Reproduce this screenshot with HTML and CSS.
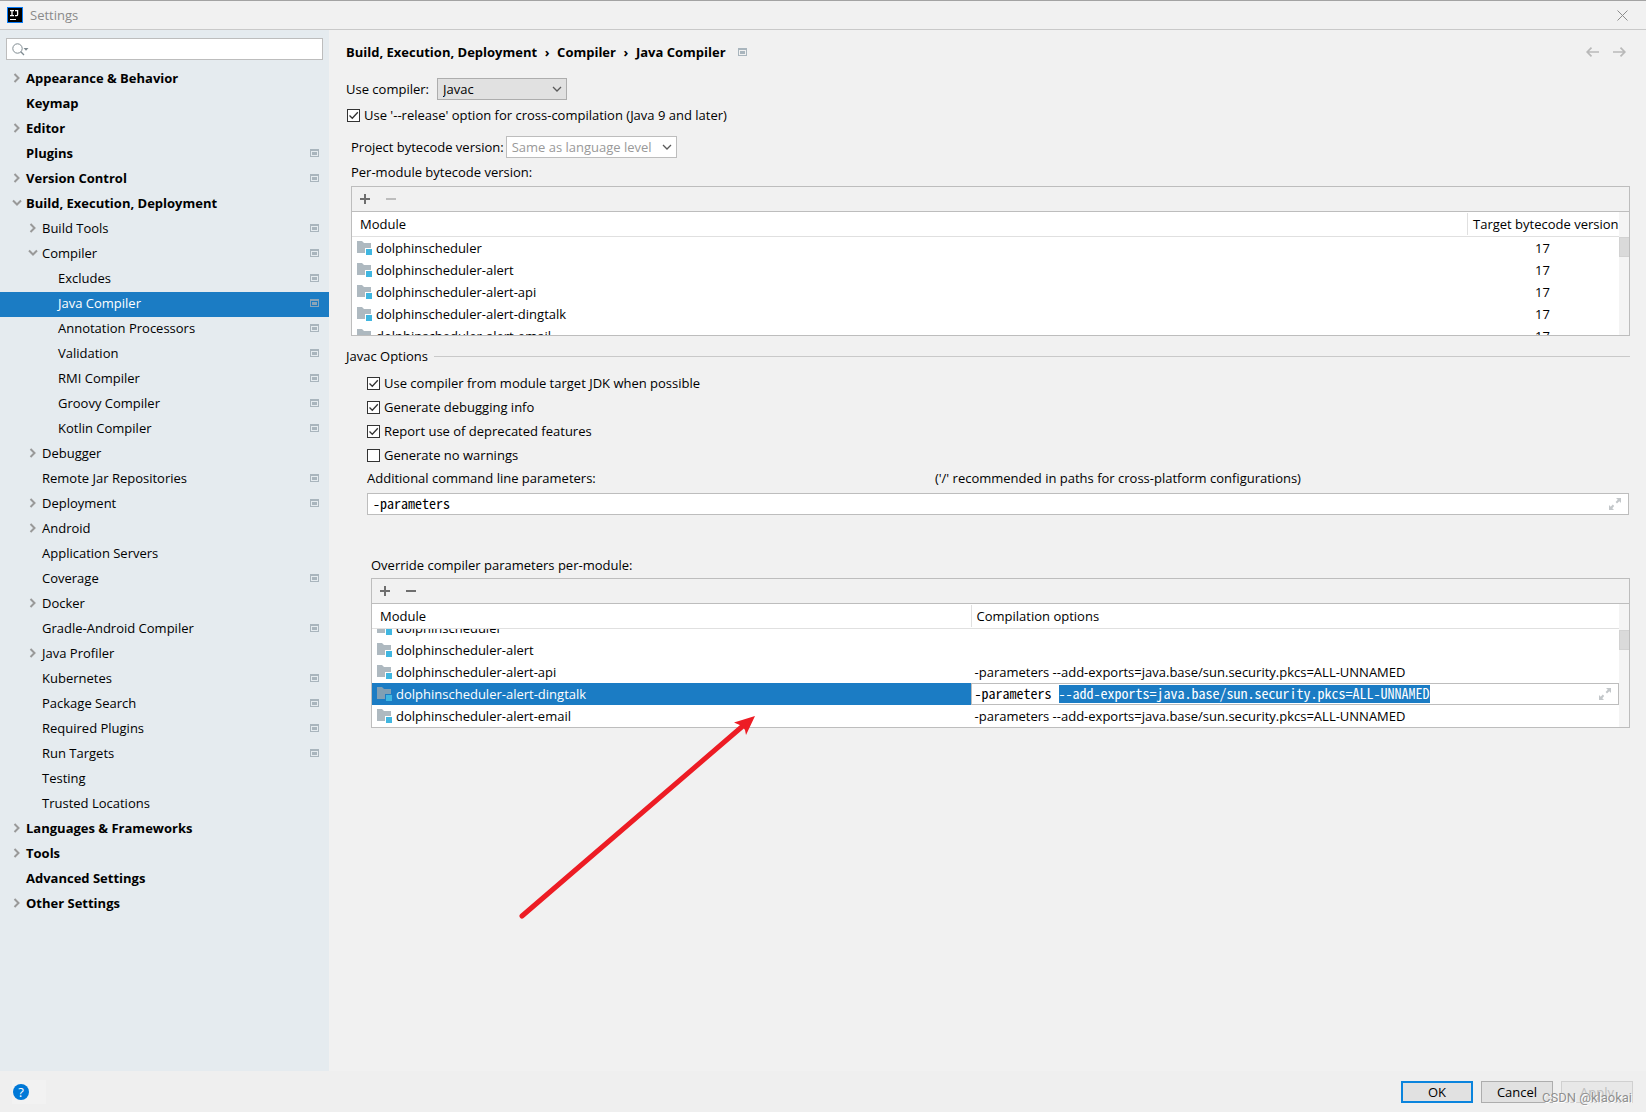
FILE: index.html
```html
<!DOCTYPE html>
<html lang="en">
<head>
<meta charset="utf-8">
<title>Settings</title>
<link rel="stylesheet" href="styles.css">
</head>
<body>
<svg class="sprite" aria-hidden="true">
  <symbol id="scope" viewBox="0 0 9 8"><path fill="currentColor" fill-rule="evenodd" d="M0 0h9v8H0zM1 2v5h7V2zM2 3h5v3H2z"/></symbol>
  <symbol id="closed" viewBox="0 0 8 10"><path d="M1.500 1 5.500 5 1.500 9" fill="none" stroke="currentColor" stroke-width="2"/></symbol>
  <symbol id="open" viewBox="0 0 10 8"><path d="M1 1.500 5 5.500 9 1.500" fill="none" stroke="currentColor" stroke-width="2"/></symbol>
  <symbol id="down" viewBox="0 0 10 6"><path d="M1 1 5 5 9 1" fill="none" stroke="currentColor" stroke-width="1.300"/></symbol>
  <symbol id="module" viewBox="0 0 16 14"><path fill="#9aa7b0" fill-opacity=".8" d="M0 0h5l2 2h7v5H8v5H0z"/><path fill="#40b6e0" d="M9 8h6v6H9z"/></symbol>
  <symbol id="plus" viewBox="0 0 10 10"><path fill="currentColor" d="M4 0h2v4h4v2H6v4H4V6H0V4h4z"/></symbol>
  <symbol id="minus" viewBox="0 0 10 10"><path fill="currentColor" d="M0 4h10v2H0z"/></symbol>
  <symbol id="expand" viewBox="0 0 12 12"><path fill="currentColor" d="M7 0h5v5L10.300 3.300 8 5.500 6.600 4.100 8.800 1.800zM0 7l1.700 1.700L3.800 6.600 5.200 8 3.300 10.300 5 12H0z"/></symbol>
</svg>

<header class="titlebar">
  <svg class="logo" viewBox="0 0 16 16" aria-hidden="true"><path fill="#087cfa" d="M0 0h16v16H0z"/><path fill="#000" d="M1 1h14v14H1z"/><path fill="none" stroke="#fff" stroke-width="1.300" d="M3 3.600h4M5 3.600v5M3 8.600h4M8 3.600h2.600v3.800q0 1.200-1.200 1.200H8"/><path fill="#fff" d="M3 12h6v1H3z"/></svg>
  <h1 class="window-title">Settings</h1>
  <button class="icon-button close" aria-label="Close"><svg width="11" height="11" viewBox="0 0 11 11"><path d="M.5.500l10 10M10.500.500l-10 10" stroke="#8c8c8c" fill="none"/></svg></button>
</header>

<div class="workspace">
  <aside class="sidebar">
    <div class="search">
      <svg width="17" height="13" viewBox="0 0 17 13" aria-hidden="true"><circle cx="5.500" cy="5.500" r="4.700" fill="none" stroke="#7f8b91"/><path d="M8.800 8.800 12 12" stroke="#7f8b91" stroke-width="1.300"/><path fill="#7f8b91" d="M11.500 5h5L14 7.800z"/></svg>
      <input type="text" aria-label="Search settings">
    </div>
    <nav aria-label="Settings categories">
      <ul class="tree">
        <li><a class="node top" href="#"><svg class="twisty"><use href="#closed"/></svg><span>Appearance &amp; Behavior</span></a></li>
        <li><a class="node top" href="#"><i class="twisty"></i><span>Keymap</span></a></li>
        <li><a class="node top" href="#"><svg class="twisty"><use href="#closed"/></svg><span>Editor</span></a></li>
        <li><a class="node top" href="#"><i class="twisty"></i><span>Plugins</span><svg class="scope"><use href="#scope"/></svg></a></li>
        <li><a class="node top" href="#"><svg class="twisty"><use href="#closed"/></svg><span>Version Control</span><svg class="scope"><use href="#scope"/></svg></a></li>
        <li><a class="node top" href="#"><svg class="twisty"><use href="#open"/></svg><span>Build, Execution, Deployment</span></a>
          <ul>
            <li><a class="node group" href="#"><svg class="twisty"><use href="#closed"/></svg><span>Build Tools</span><svg class="scope"><use href="#scope"/></svg></a></li>
            <li><a class="node group" href="#"><svg class="twisty"><use href="#open"/></svg><span>Compiler</span><svg class="scope"><use href="#scope"/></svg></a>
              <ul>
                <li><a class="node leaf" href="#"><i class="twisty"></i><span>Excludes</span><svg class="scope"><use href="#scope"/></svg></a></li>
                <li><a class="node leaf selected" href="#" aria-current="page"><i class="twisty"></i><span>Java Compiler</span><svg class="scope"><use href="#scope"/></svg></a></li>
                <li><a class="node leaf" href="#"><i class="twisty"></i><span>Annotation Processors</span><svg class="scope"><use href="#scope"/></svg></a></li>
                <li><a class="node leaf" href="#"><i class="twisty"></i><span>Validation</span><svg class="scope"><use href="#scope"/></svg></a></li>
                <li><a class="node leaf" href="#"><i class="twisty"></i><span>RMI Compiler</span><svg class="scope"><use href="#scope"/></svg></a></li>
                <li><a class="node leaf" href="#"><i class="twisty"></i><span>Groovy Compiler</span><svg class="scope"><use href="#scope"/></svg></a></li>
                <li><a class="node leaf" href="#"><i class="twisty"></i><span>Kotlin Compiler</span><svg class="scope"><use href="#scope"/></svg></a></li>
              </ul>
            </li>
            <li><a class="node group" href="#"><svg class="twisty"><use href="#closed"/></svg><span>Debugger</span></a></li>
            <li><a class="node group" href="#"><i class="twisty"></i><span>Remote Jar Repositories</span><svg class="scope"><use href="#scope"/></svg></a></li>
            <li><a class="node group" href="#"><svg class="twisty"><use href="#closed"/></svg><span>Deployment</span><svg class="scope"><use href="#scope"/></svg></a></li>
            <li><a class="node group" href="#"><svg class="twisty"><use href="#closed"/></svg><span>Android</span></a></li>
            <li><a class="node group" href="#"><i class="twisty"></i><span>Application Servers</span></a></li>
            <li><a class="node group" href="#"><i class="twisty"></i><span>Coverage</span><svg class="scope"><use href="#scope"/></svg></a></li>
            <li><a class="node group" href="#"><svg class="twisty"><use href="#closed"/></svg><span>Docker</span></a></li>
            <li><a class="node group" href="#"><i class="twisty"></i><span>Gradle-Android Compiler</span><svg class="scope"><use href="#scope"/></svg></a></li>
            <li><a class="node group" href="#"><svg class="twisty"><use href="#closed"/></svg><span>Java Profiler</span></a></li>
            <li><a class="node group" href="#"><i class="twisty"></i><span>Kubernetes</span><svg class="scope"><use href="#scope"/></svg></a></li>
            <li><a class="node group" href="#"><i class="twisty"></i><span>Package Search</span><svg class="scope"><use href="#scope"/></svg></a></li>
            <li><a class="node group" href="#"><i class="twisty"></i><span>Required Plugins</span><svg class="scope"><use href="#scope"/></svg></a></li>
            <li><a class="node group" href="#"><i class="twisty"></i><span>Run Targets</span><svg class="scope"><use href="#scope"/></svg></a></li>
            <li><a class="node group" href="#"><i class="twisty"></i><span>Testing</span></a></li>
            <li><a class="node group" href="#"><i class="twisty"></i><span>Trusted Locations</span></a></li>
          </ul>
        </li>
        <li><a class="node top" href="#"><svg class="twisty"><use href="#closed"/></svg><span>Languages &amp; Frameworks</span></a></li>
        <li><a class="node top" href="#"><svg class="twisty"><use href="#closed"/></svg><span>Tools</span></a></li>
        <li><a class="node top" href="#"><i class="twisty"></i><span>Advanced Settings</span></a></li>
        <li><a class="node top" href="#"><svg class="twisty"><use href="#closed"/></svg><span>Other Settings</span></a></li>
      </ul>
    </nav>
  </aside>

  <main class="content">
    <div class="crumbs">
      <a href="#">Build, Execution, Deployment</a><span class="sep">›</span><a href="#">Compiler</a><span class="sep">›</span><a href="#">Java Compiler</a>
      <svg class="scope"><use href="#scope"/></svg>
      <div class="history">
        <button class="icon-button" aria-label="Back"><svg width="13" height="10" viewBox="0 0 13 10"><path d="M1 5h12M5.500.700 1.200 5l4.300 4.300" fill="none" stroke="#b9b9b9" stroke-width="1.700"/></svg></button>
        <button class="icon-button" aria-label="Forward"><svg width="13" height="10" viewBox="0 0 13 10"><path d="M0 5h12M7.500.700 11.800 5 7.500 9.300" fill="none" stroke="#b9b9b9" stroke-width="1.700"/></svg></button>
      </div>
    </div>

    <div class="field compiler">
      <label for="compiler">Use compiler:</label>
      <div class="combo button-like"><select id="compiler"><option>Javac</option></select><svg><use href="#down"/></svg></div>
    </div>
    <label class="check release"><input type="checkbox" checked><span>Use '--release' option for cross-compilation (Java 9 and later)</span></label>

    <section class="bytecode">
      <div class="field">
        <label for="bytecode">Project bytecode version:</label>
        <div class="combo hint"><select id="bytecode"><option>Same as language level</option></select><svg><use href="#down"/></svg></div>
      </div>
      <h2 class="caption">Per-module bytecode version:</h2>
      <div class="panel">
        <div class="toolbar">
          <button class="icon-button" aria-label="Add"><svg><use href="#plus"/></svg></button>
          <button class="icon-button" aria-label="Remove" disabled><svg><use href="#minus"/></svg></button>
        </div>
        <div class="viewport">
          <div class="scroller">
            <table class="targets">
              <thead><tr><th>Module</th><th class="target">Target bytecode version</th></tr></thead>
              <tbody>
                <tr><td><div class="module"><svg><use href="#module"/></svg>dolphinscheduler</div></td><td>17</td></tr>
                <tr><td><div class="module"><svg><use href="#module"/></svg>dolphinscheduler-alert</div></td><td>17</td></tr>
                <tr><td><div class="module"><svg><use href="#module"/></svg>dolphinscheduler-alert-api</div></td><td>17</td></tr>
                <tr><td><div class="module"><svg><use href="#module"/></svg>dolphinscheduler-alert-dingtalk</div></td><td>17</td></tr>
                <tr><td><div class="module"><svg><use href="#module"/></svg>dolphinscheduler-alert-email</div></td><td>17</td></tr>
              </tbody>
            </table>
          </div>
          <div class="track"><div class="thumb"></div></div>
        </div>
      </div>
    </section>

    <h2 class="divider">Javac Options</h2>
    <section class="options">
      <label class="check"><input type="checkbox" checked><span>Use compiler from module target JDK when possible</span></label>
      <label class="check"><input type="checkbox" checked><span>Generate debugging info</span></label>
      <label class="check"><input type="checkbox" checked><span>Report use of deprecated features</span></label>
      <label class="check"><input type="checkbox"><span>Generate no warnings</span></label>
      <div class="params-label"><label for="params">Additional command line parameters:</label><span>('/' recommended in paths for cross-platform configurations)</span></div>
      <div class="expandable params"><input id="params" type="text" value="-parameters"><svg><use href="#expand"/></svg></div>
    </section>

    <section class="overrides">
      <h2 class="caption">Override compiler parameters per-module:</h2>
      <div class="panel">
        <div class="toolbar">
          <button class="icon-button" aria-label="Add"><svg><use href="#plus"/></svg></button>
          <button class="icon-button" aria-label="Remove"><svg><use href="#minus"/></svg></button>
        </div>
        <div class="viewport">
          <div class="scroller" id="override-list">
            <table class="compilation">
              <thead><tr><th>Module</th><th class="options-col">Compilation options</th></tr></thead>
              <tbody>
                <tr><td><div class="module"><svg><use href="#module"/></svg>dolphinscheduler</div></td><td></td></tr>
                <tr><td><div class="module"><svg><use href="#module"/></svg>dolphinscheduler-alert</div></td><td></td></tr>
                <tr><td><div class="module"><svg><use href="#module"/></svg>dolphinscheduler-alert-api</div></td><td>-parameters --add-exports=java.base/sun.security.pkcs=ALL-UNNAMED</td></tr>
                <tr class="current"><td><div class="module"><svg><use href="#module"/></svg>dolphinscheduler-alert-dingtalk</div></td><td><div class="expandable"><input id="cell-editor" type="text" aria-label="Compilation options" value="-parameters --add-exports=java.base/sun.security.pkcs=ALL-UNNAMED"><svg><use href="#expand"/></svg></div></td></tr>
                <tr><td><div class="module"><svg><use href="#module"/></svg>dolphinscheduler-alert-email</div></td><td>-parameters --add-exports=java.base/sun.security.pkcs=ALL-UNNAMED</td></tr>
              </tbody>
            </table>
          </div>
          <div class="track"><div class="thumb"></div></div>
        </div>
      </div>
      <svg class="pointer" viewBox="0 0 240 206" aria-hidden="true"><path d="M4 201 226 10" stroke="#ed1c24" stroke-width="5" stroke-linecap="round"/><path fill="#ed1c24" d="M237 1 216 7.500 224 11 227 15 228 20z"/></svg>
    </section>
  </main>
</div>

<footer class="footer">
  <button class="help" aria-label="Help"><span>?</span></button>
  <div class="actions">
    <button class="action default">OK</button>
    <button class="action">Cancel</button>
    <button class="action" disabled>Apply</button>
  </div>
  <span class="watermark">CSDN @klaokai</span>
</footer>
<script src="script.js"></script>
</body>
</html>
```
FILE: styles.css
```css
* { box-sizing: border-box; }

body {
  margin: 0;
  min-height: 100vh;
  display: flex;
  flex-direction: column;
  background: #f1f1f1;
  color: #000;
  font: 13px/18px "Open Sans", "Noto Sans", sans-serif;
}

button, input, select { font: inherit; color: inherit; }
h1, h2 { margin: 0; font-size: 13px; font-weight: 400; }
a { color: inherit; text-decoration: none; }
ul { list-style: none; margin: 0; padding: 0; }
svg { display: block; flex: none; }
.sprite { display: none; }

.icon-button {
  display: flex;
  padding: 0;
  border: 0;
  background: none;
  color: #6e6e6e;
}
.icon-button:disabled { color: #bdbdbd; }

/* Title bar */
.titlebar {
  display: flex;
  align-items: center;
  height: 30px;
  padding: 0 18px 0 7px;
  border-top: 1px solid #a3a3a3;
  border-bottom: 1px solid #c9c9c9;
}
.logo { width: 16px; height: 16px; }
.window-title { margin-left: 7px; color: #8a8a8a; }
.close { margin-left: auto; }

/* Sidebar */
.workspace { flex: 1; display: flex; }
.sidebar {
  flex: none;
  width: 329px;
  padding-top: 8px;
  background: #e5ebef;
}
.search {
  display: flex;
  align-items: center;
  height: 22px;
  margin: 0 6px 7px;
  padding-left: 5px;
  border: 1px solid #bdbdbd;
  background: #fff;
}
.search input { flex: 1; min-width: 0; border: 0; padding: 0 4px; outline: 0; background: none; }
.node {
  display: flex;
  align-items: center;
  height: 25px;
  padding: 0 10px 3px 12px;
}
.node .scope { margin-left: auto; }
.node.top { font-weight: 700; }
.node.group { padding-left: 28px; }
.node.leaf { padding-left: 44px; }
.node.selected { background: #1b7cc4; color: #fff; }
.twisty { width: 10px; height: 10px; margin-right: 4px; color: #999; }
.scope { width: 9px; height: 8px; color: #a9b5bd; }
.selected .scope { color: #8aa4b8; }

/* Content */
.content { flex: 1; min-width: 0; padding: 12px 16px 0 17px; }
.crumbs { display: flex; align-items: center; height: 20px; font-weight: 700; }
.sep { width: 20px; text-align: center; }
.crumbs .scope { margin-left: 12px; }
.history { display: flex; gap: 14px; margin-left: auto; margin-right: 4px; }

.field { display: flex; align-items: center; height: 22px; }
.compiler { margin-top: 16px; gap: 8px; }
.bytecode .field { gap: 2px; }
.combo { position: relative; height: 22px; width: 130px; border: 1px solid #bdbdbd; background: #fff; }
.combo.button-like { border-color: #adadad; background: #e1e1e1; }
.combo.hint { width: 171px; color: #999; }
.combo select {
  appearance: none;
  width: 100%;
  height: 20px;
  padding: 0 5px;
  border: 0;
  outline: 0;
  background: none;
}
.combo svg { position: absolute; right: 4px; top: 7px; width: 10px; height: 6px; color: #5a5a5a; pointer-events: none; }

.check { display: flex; align-items: center; height: 24px; gap: 4px; }
.check input {
  appearance: none;
  width: 13px;
  height: 13px;
  margin: 0;
  border: 1px solid #333;
  background: #fff;
}
.check input:checked {
  background: #fff url("data:image/svg+xml,%3Csvg xmlns='http://www.w3.org/2000/svg' viewBox='0 0 11 11'%3E%3Cpath d='M1.500 5.500 4.300 8.300 9.800 2.300' fill='none' stroke='%23333' stroke-width='1.300'/%3E%3C/svg%3E");
}
.release { margin-top: 3px; margin-left: 1px; }

.bytecode { margin: 9px 0 0 5px; }
.caption { height: 18px; }
.bytecode .caption { margin: 5px 0; }

.panel { border: 1px solid #bdbdbd; }
.toolbar { display: flex; align-items: center; gap: 16px; height: 25px; padding-left: 8px; border-bottom: 1px solid #bdbdbd; }
.toolbar svg { width: 10px; height: 10px; }
.viewport { display: flex; height: 123px; background: #fff; }
.scroller { flex: 1; min-width: 0; overflow-y: auto; scrollbar-width: none; }
.track { flex: none; width: 10px; padding-top: 25px; background: #f4f4f4; }
.thumb { height: 20px; border: 1px solid #d2d2d2; border-right: 0; background: #dadada; }

table { width: 100%; table-layout: fixed; border-spacing: 0; }
th {
  position: sticky;
  top: 0;
  z-index: 1;
  height: 25px;
  padding: 0 0 0 8px;
  border-bottom: 1px solid #e0e0e0;
  background: #fff;
  font-weight: 400;
  text-align: left;
  white-space: nowrap;
}
th + th { padding-left: 6px; background: linear-gradient(#e0e0e0, #e0e0e0) 0 1px / 1px 22px no-repeat #fff; }
td { height: 22px; padding: 0 5px; white-space: nowrap; }
td + td { padding-left: 4px; }
.target { width: 152px; }
.targets td + td { text-align: center; }
.options-col { width: 52%; }
.module { display: flex; align-items: center; gap: 3px; }
.module svg { width: 16px; height: 14px; }
.current td { background: #1b7cc4; color: #fff; }
.current td + td { padding: 0; color: #000; }

.divider { display: flex; align-items: center; gap: 6px; height: 18px; margin-top: 11px; }
.divider::after { content: ""; flex: 1; height: 1px; background: #c9c9c9; }
.options { margin: 6px 1px 0 21px; }
.params-label { display: grid; grid-template-columns: 45% 1fr; height: 26px; padding-top: 2px; }

.expandable { display: flex; align-items: center; height: 22px; padding-right: 7px; border: 1px solid #bdbdbd; background: #fff; }
.expandable input {
  flex: 1;
  min-width: 0;
  height: 18px;
  padding: 0 0 2px 3px;
  border: 0;
  outline: 0;
  background: none;
  font: 14px/16px "Noto Sans Mono CJK SC", "Liberation Mono", monospace;
}
.expandable.params input { padding-left: 5px; }
.expandable input::selection { background: #1b7cc4; color: #fff; }
.expandable svg { width: 12px; height: 12px; color: #c3c7ca; }

.overrides { position: relative; margin: 41px 0 0 25px; }
.overrides .caption { margin-bottom: 4px; }
.overrides .track { padding-top: 26px; }
.pointer { position: absolute; left: 147px; top: 159px; width: 240px; height: 206px; pointer-events: none; }

/* Footer */
.footer {
  position: relative;
  display: flex;
  align-items: center;
  justify-content: space-between;
  height: 41px;
  padding: 0 13px 0 12px;
  background: #efefef;
}
.help { width: 34px; height: 24px; padding: 0 1px; border: 0; background: #f2f2f2; }
.help span { display: block; width: 16px; height: 16px; border-radius: 50%; background: #0078d7; color: #fff; line-height: 16px; }
.actions { display: flex; gap: 8px; }
.action { width: 72px; height: 22px; padding: 0; border: 1px solid #adadad; background: #e1e1e1; line-height: 18px; }
.action.default { border: 2px solid #0a84dd; }
.action:disabled { border-color: #d0d0d0; background: #e8e8e8; color: #bdbdbd; }
.watermark { position: absolute; right: 14px; bottom: 5px; color: #8f8f8f; font: 13px/18px Roboto, sans-serif; text-shadow: 1px 1px 0 #fff; }
```
FILE: script.js
```js
// Open the cell editor with its second argument selected.
const editor = document.getElementById("cell-editor");
editor.focus({ preventScroll: true });
editor.setSelectionRange(editor.value.indexOf("--add"), editor.value.length);
document.getElementById("override-list").scrollTop = 12;
```
